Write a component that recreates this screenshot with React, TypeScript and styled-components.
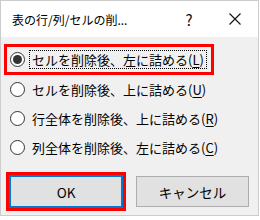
import styled, { createGlobalStyle } from 'styled-components';

const GlobalStyle = createGlobalStyle`
  html, body {
    margin: 0;
    padding: 0;
    background: #ffffff;
  }
  body {
    font-family: "Noto Sans CJK JP", "Noto Sans", sans-serif;
    color: #000;
  }
`;

const Window = styled.div`
  width: 259px;
  height: 216px;
  box-sizing: border-box;
  border: 1px solid #cccccc;
  background: #f0f0f0;
  display: flex;
  flex-direction: column;
`;

const TitleBar = styled.div`
  height: 36px;
  background: #ffffff;
  display: flex;
  align-items: center;
  padding-left: 11px;
  flex-shrink: 0;
`;

const Title = styled.div`
  font-size: 12px;
  flex: 1;
  white-space: nowrap;
`;

const TitleButton = styled.div<{ width: number }>`
  width: ${(p) => p.width}px;
  height: 36px;
  display: flex;
  align-items: center;
  justify-content: center;
  font-size: 15px;
  color: #111;
`;

const Options = styled.div`
  display: flex;
  flex-direction: column;
  padding: 7px 0 0 3px;
`;

const Option = styled.div<{ highlighted?: boolean }>`
  display: flex;
  align-items: center;
  width: fit-content;
  box-sizing: border-box;
  height: ${(p) => (p.highlighted ? 31 : 29)}px;
  border: 3px solid ${(p) => (p.highlighted ? '#ff0000' : 'transparent')};
  border-width: ${(p) => (p.highlighted ? '3px' : '0 3px')};
  padding: 0 4px 0 3px;
  gap: 4px;
`;

const Radio = styled.span<{ checked?: boolean }>`
  width: 15px;
  height: 15px;
  box-sizing: border-box;
  border-radius: 50%;
  border: 1px solid #333333;
  background: #ffffff;
  display: flex;
  align-items: center;
  justify-content: center;
  flex-shrink: 0;
  &::after {
    content: '';
    display: ${(p) => (p.checked ? 'block' : 'none')};
    width: 9px;
    height: 9px;
    border-radius: 50%;
    background: #333333;
  }
`;

const Label = styled.span<{ focused?: boolean }>`
  font-size: 13px;
  line-height: 17px;
  padding: 0 2px;
  border: 1px dotted ${(p) => (p.focused ? '#000' : 'transparent')};
  white-space: nowrap;
`;

const Key = styled.span`
  text-decoration: underline;
  text-underline-offset: 2px;
`;

const Buttons = styled.div`
  display: flex;
  align-items: center;
  gap: 10px;
  padding: 10px 0 0 5px;
`;

const Highlight = styled.div`
  border: 3px solid #ff0000;
  display: flex;
`;

const Button = styled.button<{ primary?: boolean }>`
  width: ${(p) => (p.primary ? 114 : 113)}px;
  height: ${(p) => (p.primary ? 33 : 31)}px;
  box-sizing: border-box;
  background: #e1e1e1;
  border: ${(p) => (p.primary ? '2px solid #0078d7' : '1px solid #adadad')};
  font-family: "Noto Sans CJK JP", "Noto Sans", sans-serif;
  font-size: 13.5px;
  color: #000;
  padding: 0;
`;

const options = [
  { text: 'セルを削除後、左に詰める', key: 'L', checked: true },
  { text: 'セルを削除後、上に詰める', key: 'U' },
  { text: '行全体を削除後、上に詰める', key: 'R' },
  { text: '列全体を削除後、左に詰める', key: 'C' },
];

export default function App() {
  return (
    <>
      <GlobalStyle />
      <Window>
        <TitleBar>
          <Title>表の行/列/セルの削...</Title>
          <TitleButton width={46}>?</TitleButton>
          <TitleButton width={46}>
            <svg width="12" height="12" viewBox="0 0 12 12">
              <path d="M0.5 0.5 L11.5 11.5 M11.5 0.5 L0.5 11.5" stroke="#111" strokeWidth="1.1" />
            </svg>
          </TitleButton>
        </TitleBar>
        <Options>
          {options.map((o) => (
            <Option key={o.key} highlighted={o.checked}>
              <Radio checked={o.checked} />
              <Label focused={o.checked}>
                {o.text}(<Key>{o.key}</Key>)
              </Label>
            </Option>
          ))}
        </Options>
        <Buttons>
          <Highlight>
            <Button primary>OK</Button>
          </Highlight>
          <Button>キャンセル</Button>
        </Buttons>
      </Window>
    </>
  );
}
